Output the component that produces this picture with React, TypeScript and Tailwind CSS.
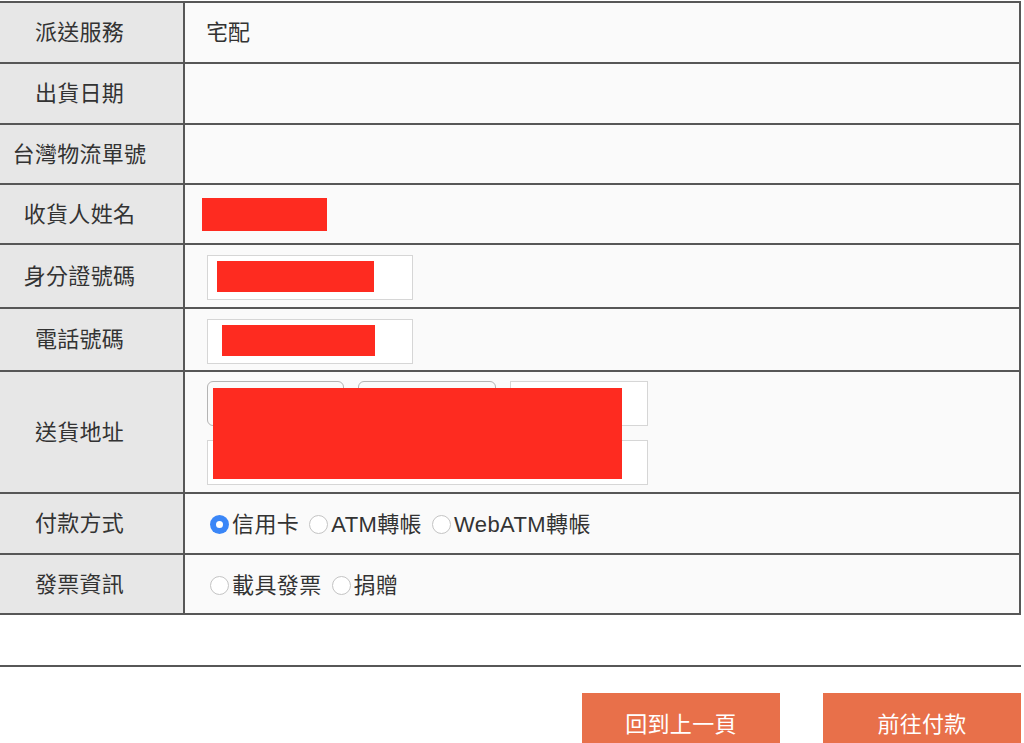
import React from "react";

const FONT = { fontFamily: '"Liberation Sans", "Noto Sans CJK TC", sans-serif' };

function Radio({ checked, label }: { checked?: boolean; label: string }) {
  return (
    <div className="flex items-center">
      {checked ? (
        <span className="w-[19px] h-[19px] rounded-full bg-[#3a86f7] flex items-center justify-center">
          <span className="w-[7px] h-[7px] rounded-full bg-white" />
        </span>
      ) : (
        <span className="w-[19px] h-[19px] rounded-full bg-white border border-[#c4c4c4]" />
      )}
      <span className="ml-[3px] tracking-[0.4px]">{label}</span>
    </div>
  );
}

function Row({ label, h, children }: { label: string; h: string; children?: React.ReactNode }) {
  return (
    <div className={`flex border-b-2 border-[#575757] ${h}`}>
      <div className="w-[185px] shrink-0 bg-[#e7e7e7] border-r-2 border-[#575757] flex items-center justify-center pr-[24px] text-[#333] tracking-[0.3px]">
        {label}
      </div>
      <div className="flex-1 bg-[#fafafa] relative">{children}</div>
    </div>
  );
}

export default function App() {
  return (
    <div className="w-[1024px] h-[743px] overflow-hidden bg-white text-[22px] text-[#333]" style={FONT}>
      <div className="mt-[1px] w-[1021px] border-t-2 border-r-2 border-[#575757]">
        <Row label="派送服務" h="h-[61px]">
          <div className="h-full flex items-center pl-[21px]">宅配</div>
        </Row>
        <Row label="出貨日期" h="h-[61px]" />
        <Row label="台灣物流單號" h="h-[60px]" />
        <Row label="收貨人姓名" h="h-[60px]">
          <div className="h-full flex items-center pl-[17px]">
            <div className="w-[125px] h-[33px] bg-[#fe2b20]" />
          </div>
        </Row>
        <Row label="身分證號碼" h="h-[64px]">
          <div className="h-full flex items-center pl-[22px] pt-[3px]">
            <div className="w-[206px] h-[45px] bg-white border border-[#d6d6d6] pl-[9px] pt-[5px]">
              <div className="w-[157px] h-[31px] bg-[#fe2b20]" />
            </div>
          </div>
        </Row>
        <Row label="電話號碼" h="h-[63px]">
          <div className="h-full flex items-center pl-[22px] pt-[3px]">
            <div className="w-[206px] h-[45px] bg-white border border-[#d6d6d6] pl-[14px] pt-[5px]">
              <div className="w-[153px] h-[31px] bg-[#fe2b20]" />
            </div>
          </div>
        </Row>
        <Row label="送貨地址" h="h-[122px]">
          <div className="pl-[22px] pt-[9px] flex flex-col gap-[14px]">
            <div className="flex gap-[14px]">
              <div className="w-[137px] h-[45px] rounded-[6px] border border-[#b4b4b4] bg-[#fafafa]" />
              <div className="w-[138px] h-[45px] rounded-[6px] border border-[#b4b4b4] bg-[#fafafa]" />
              <div className="w-[138px] h-[45px] bg-white border border-[#d6d6d6]" />
            </div>
            <div className="w-[441px] h-[45px] bg-white border border-[#d6d6d6]" />
          </div>
          <div className="absolute left-[28px] top-[16px] w-[409px] h-[91px] bg-[#fe2b20]" />
        </Row>
        <Row label="付款方式" h="h-[61px]">
          <div className="h-full flex items-center pl-[25px] gap-[10px] pt-[2px]">
            <Radio checked label="信用卡" />
            <Radio label="ATM轉帳" />
            <Radio label="WebATM轉帳" />
          </div>
        </Row>
        <Row label="發票資訊" h="h-[60px]">
          <div className="h-full flex items-center pl-[25px] gap-[10px] pt-[2px]">
            <Radio label="載具發票" />
            <Radio label="捐贈" />
          </div>
        </Row>
      </div>
      <div className="mt-[50px] w-[1021px] h-[2px] bg-[#575757]" />
      <div className="mt-[26px] w-[1021px] flex justify-end gap-[43px]">
        <button className="w-[198px] h-[62px] bg-[#e8704a] text-white text-[22px] tracking-[0.3px]" style={FONT}>
          回到上一頁
        </button>
        <button className="w-[198px] h-[62px] bg-[#e8704a] text-white text-[22px] tracking-[0.3px]" style={FONT}>
          前往付款
        </button>
      </div>
    </div>
  );
}
